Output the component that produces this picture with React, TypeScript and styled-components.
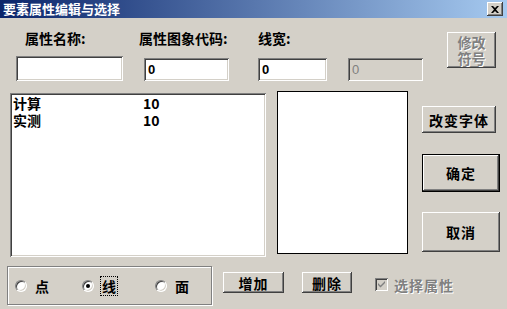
import styled, { createGlobalStyle, css } from "styled-components";

const GlobalStyle = createGlobalStyle`
  html, body {
    margin: 0;
    padding: 0;
  }
  body {
    background: #d4d0c8;
    font-family: "Noto Sans CJK SC", "Liberation Sans", sans-serif;
  }
`;

const raised = css`
  background: #d4d0c8;
  box-shadow: inset -1px -1px #404040, inset 1px 1px #ffffff,
    inset -2px -2px #808080, inset 2px 2px #d4d0c8;
`;

const sunken = css`
  box-shadow: inset 1px 1px #808080, inset -1px -1px #ffffff,
    inset 2px 2px #404040, inset -2px -2px #d4d0c8;
`;

const Window = styled.div`
  width: 507px;
  height: 309px;
  background: #d4d0c8;
  overflow: hidden;
  display: flex;
  flex-direction: column;
  font-family: "Noto Sans CJK SC", "Liberation Sans", sans-serif;
`;

const TitleBar = styled.div`
  height: 18px;
  flex: none;
  display: flex;
  align-items: center;
  justify-content: space-between;
  padding: 0 4px 0 3px;
  background: linear-gradient(to right, #0a246a, #a6caf0);
`;

const TitleText = styled.span`
  color: #fff;
  font-weight: 700;
  font-size: 13px;
  line-height: 18px;
`;

const CloseButton = styled.div`
  ${raised};
  width: 16px;
  height: 14px;
  display: flex;
  align-items: center;
  justify-content: center;
`;

const TopRow = styled.div`
  display: flex;
  height: 73px;
  flex: none;
`;

const FieldsArea = styled.div`
  display: flex;
  flex-direction: column;
  padding-top: 12px;
`;

const LabelRow = styled.div`
  display: grid;
  grid-template-columns: 114px 119px auto;
  padding-left: 25px;
  height: 16px;
`;

const FieldLabel = styled.span`
  font-size: 14px;
  font-weight: 700;
  line-height: 16px;
  white-space: nowrap;
  color: #000;
`;

const InputRow = styled.div`
  display: flex;
  align-items: flex-end;
  margin-top: 10px;
  padding-left: 16px;
  height: 25px;
`;

const TextBox = styled.input<{ $w: number; $h?: number; $ml?: number }>`
  ${sunken};
  box-sizing: border-box;
  width: ${(p) => p.$w}px;
  height: ${(p) => p.$h ?? 23}px;
  margin: 0 0 0 ${(p) => p.$ml ?? 0}px;
  border: none;
  outline: none;
  padding: 0 0 0 4px;
  background: #fff;
  font-family: "Liberation Sans", sans-serif;
  font-weight: 700;
  font-size: 13px;
  color: #000;

  &:disabled {
    background: #d4d0c8;
    color: #808080;
    font-weight: 400;
  }
`;

const Button = styled.div<{ $w: number; $h: number; $mt?: number; $ml?: number; $default?: boolean }>`
  ${raised};
  box-sizing: border-box;
  flex: none;
  width: ${(p) => p.$w}px;
  height: ${(p) => p.$h}px;
  margin-top: ${(p) => p.$mt ?? 0}px;
  margin-left: ${(p) => p.$ml ?? 0}px;
  display: flex;
  align-items: center;
  justify-content: center;
  font-size: 14px;
  font-weight: 700;
  letter-spacing: 1px;
  color: #000;
  ${(p) =>
    p.$default &&
    css`
      border: 1px solid #000;
    `}
`;

const DisabledButtonText = styled.span`
  display: flex;
  flex-direction: column;
  align-items: center;
  color: #808080;
  text-shadow: 1px 1px #fff;
  font-size: 14px;
  font-weight: 700;
  line-height: 16px;
  letter-spacing: 0;
`;

const MiddleRow = styled.div`
  display: flex;
  align-items: flex-start;
  height: 166px;
  flex: none;
`;

const ListBox = styled.div`
  ${sunken};
  box-sizing: border-box;
  width: 256px;
  height: 164px;
  margin: 2px 0 0 10px;
  padding: 2px 3px;
  background: #fff;
`;

const ListRow = styled.div`
  display: grid;
  grid-template-columns: 130px auto;
  font-size: 14px;
  font-weight: 700;
  line-height: 17px;
  color: #000;
`;

const Preview = styled.div`
  box-sizing: border-box;
  width: 131px;
  height: 163px;
  margin-left: 11px;
  border: 1px solid #000;
  background: #fff;
`;

const SideButtons = styled.div`
  display: flex;
  flex-direction: column;
  margin-left: 14px;
`;

const BottomRow = styled.div`
  display: flex;
  align-items: flex-start;
  margin-top: 9px;
`;

const GroupBox = styled.div`
  box-sizing: border-box;
  width: 205px;
  height: 39px;
  margin-left: 7px;
  padding-left: 7px;
  display: flex;
  align-items: center;
  border: 1px solid #808080;
  box-shadow: inset 1px 1px #fff, 1px 1px #fff;
`;

const RadioOption = styled.div<{ $w: number }>`
  display: flex;
  align-items: center;
  gap: 6px;
  width: ${(p) => p.$w}px;
  flex: none;
`;

const RadioCircle = styled.span<{ $on?: boolean }>`
  box-sizing: border-box;
  width: 12px;
  height: 12px;
  border-radius: 50%;
  background: #fff;
  border: 1px solid;
  border-color: #808080 #ffffff #ffffff #808080;
  box-shadow: inset 1px 1px #404040, inset -1px -1px #d4d0c8;
  display: flex;
  align-items: center;
  justify-content: center;
  &::after {
    content: "";
    display: ${(p) => (p.$on ? "block" : "none")};
    width: 4px;
    height: 4px;
    border-radius: 50%;
    background: #000;
  }
`;

const RadioLabel = styled.span<{ $focus?: boolean }>`
  font-size: 14px;
  font-weight: 700;
  line-height: 16px;
  padding: 1px;
  border: 1px dotted ${(p) => (p.$focus ? "#000" : "transparent")};
  color: #000;
`;

const CheckRow = styled.div`
  display: flex;
  align-items: center;
  gap: 6px;
  margin: 8px 0 0 23px;
  height: 21px;
`;

const CheckBox = styled.span`
  ${sunken};
  box-sizing: border-box;
  width: 13px;
  height: 13px;
  background: #d4d0c8;
  display: flex;
  align-items: center;
  justify-content: center;
`;

const DisabledLabel = styled.span`
  color: #808080;
  text-shadow: 1px 1px #fff;
  font-size: 14px;
  font-weight: 700;
  letter-spacing: 1px;
`;

const listItems = [
  { name: "计算", value: "10" },
  { name: "实测", value: "10" },
];

export default function App() {
  return (
    <>
      <GlobalStyle />
      <Window>
        <TitleBar>
          <TitleText>要素属性编辑与选择</TitleText>
          <CloseButton>
            <svg width="8" height="7" viewBox="0 0 8 7">
              <path d="M0 0h2l2 2 2-2h2L5 3.5 8 7H6L4 5 2 7H0l3-3.5z" fill="#000" />
            </svg>
          </CloseButton>
        </TitleBar>

        <TopRow>
          <FieldsArea>
            <LabelRow>
              <FieldLabel>属性名称:</FieldLabel>
              <FieldLabel>属性图象代码:</FieldLabel>
              <FieldLabel>线宽:</FieldLabel>
            </LabelRow>
            <InputRow>
              <TextBox $w={107} $h={25} defaultValue="" />
              <TextBox $w={85} $ml={21} defaultValue="0" />
              <TextBox $w={69} $ml={29} defaultValue="0" />
              <TextBox $w={75} $ml={21} defaultValue="0" disabled />
            </InputRow>
          </FieldsArea>
          <Button $w={49} $h={36} $mt={14} $ml={24}>
            <DisabledButtonText>
              <span>修改</span>
              <span>符号</span>
            </DisabledButtonText>
          </Button>
        </TopRow>

        <MiddleRow>
          <ListBox>
            {listItems.map((item) => (
              <ListRow key={item.name}>
                <span>{item.name}</span>
                <span>{item.value}</span>
              </ListRow>
            ))}
          </ListBox>
          <Preview />
          <SideButtons>
            <Button $w={74} $h={27} $mt={15}>
              改变字体
            </Button>
            <Button $w={78} $h={38} $mt={21} $default>
              确定
            </Button>
            <Button $w={78} $h={40} $mt={20}>
              取消
            </Button>
          </SideButtons>
        </MiddleRow>

        <BottomRow>
          <GroupBox>
            <RadioOption $w={67}>
              <RadioCircle />
              <RadioLabel>点</RadioLabel>
            </RadioOption>
            <RadioOption $w={73}>
              <RadioCircle $on />
              <RadioLabel $focus>线</RadioLabel>
            </RadioOption>
            <RadioOption $w={50}>
              <RadioCircle />
              <RadioLabel>面</RadioLabel>
            </RadioOption>
          </GroupBox>
          <Button $w={61} $h={21} $mt={6} $ml={11}>
            增加
          </Button>
          <Button $w={50} $h={21} $mt={6} $ml={18}>
            删除
          </Button>
          <CheckRow>
            <CheckBox>
              <svg width="7" height="7" viewBox="0 0 7 7">
                <path d="M0 2l2.5 2.5L7 0v2L2.5 6.5 0 4z" fill="#808080" />
              </svg>
            </CheckBox>
            <DisabledLabel>选择属性</DisabledLabel>
          </CheckRow>
        </BottomRow>
      </Window>
    </>
  );
}
